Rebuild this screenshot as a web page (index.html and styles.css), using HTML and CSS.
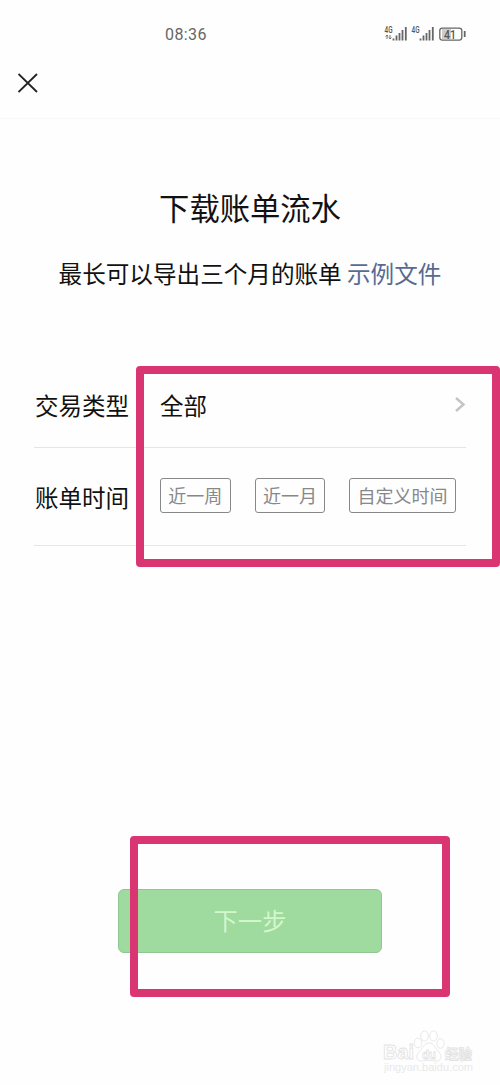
FILE: index.html
```html
<!DOCTYPE html>
<html lang="zh-CN">
<head>
    <meta charset="UTF-8">
    <meta name="viewport" content="width=device-width, initial-scale=1.0">
    <title>下载账单流水</title>
    <link rel="stylesheet" href="styles.css">
</head>
<body>
    <div class="status-bar">
        <span class="clock">08:36</span>
        <svg class="status-icons" width="86" height="20" viewBox="0 0 86 20">
            <g class="network">
                <text x="0.5" y="8.5" textLength="8" lengthAdjust="spacingAndGlyphs">4G</text>
                <text x="27.5" y="8.5" textLength="8" lengthAdjust="spacingAndGlyphs">4G</text>
            </g>
            <path class="arrows" d="M3 11v4M1.500 12.500L3 11l1 1.500M6 11v4M5 13.500L6 15l1.500-1.500"/>
            <path class="bars" d="M9.500 16.500v-2M12.500 16.500v-5M15.500 16.500V9M18.500 16.500V6M21.800 16.500V3"/>
            <path class="bars" d="M36.500 16.500v-2M39.500 16.500v-5M42.500 16.500V9M45.500 16.500V6M48.800 16.500V3"/>
            <rect class="level" x="58" y="5" width="9" height="10"/>
            <rect class="battery" x="55.800" y="4.100" width="22" height="12" rx="2.500"/>
            <text class="percent" x="60" y="14.500" textLength="12" lengthAdjust="spacingAndGlyphs">41</text>
            <path class="cap" d="M80.700 7v6"/>
        </svg>
    </div>
    <div class="nav-bar">
        <svg class="close" width="20" height="20" viewBox="0 0 20 20">
            <path d="M0.500 1l18.500 18M19 1L0.500 19"/>
        </svg>
    </div>

    <div class="header">
        <h1>下载账单流水</h1>
        <p>最长可以导出三个月的账单 <a>示例文件</a></p>
    </div>

    <div class="form">
        <div class="row row-type">
            <span class="label">交易类型</span>
            <span class="value">全部</span>
            <svg class="arrow" width="12" height="16" viewBox="0 0 12 16">
                <path d="M2 1l7.500 6.500L2 14"/>
            </svg>
        </div>
        <div class="row row-time">
            <span class="label">账单时间</span>
            <div class="options">
                <button>近一周</button>
                <button>近一月</button>
                <button>自定义时间</button>
            </div>
        </div>
    </div>

    <button class="next">下一步</button>

    <!-- highlight frames drawn over the page -->
    <div class="frame frame-form"></div>
    <div class="frame frame-next"></div>

    <svg class="watermark" width="110" height="50" viewBox="0 0 110 50">
        <g class="paw">
            <ellipse cx="38" cy="17" rx="3.800" ry="4.800"/>
            <ellipse cx="44.500" cy="10" rx="3.800" ry="5"/>
            <ellipse cx="53.500" cy="10" rx="3.800" ry="5"/>
            <ellipse cx="60.500" cy="17.500" rx="3.600" ry="4.800"/>
            <path d="M49 17c-5 0-6 5-9 8-6 5-3 11 3 10 4-1 8-1 12 0 6 1 8-5 3-10-3-3-4-8-9-8z"/>
        </g>
        <text class="brand" x="3" y="33" textLength="31" lengthAdjust="spacingAndGlyphs">Bai</text>
        <text class="du" x="42" y="32.500" textLength="14" lengthAdjust="spacingAndGlyphs">du</text>
        <text class="word" x="65" y="33" textLength="27" lengthAdjust="spacingAndGlyphs">经验</text>
        <text class="site" x="4" y="45" textLength="89" lengthAdjust="spacingAndGlyphs">jingyan.baidu.com</text>
    </svg>
</body>
</html>
```
FILE: styles.css
```css
* {
    box-sizing: border-box;
}

body {
    margin: 0;
    position: relative;
    height: 1085px;
    overflow: hidden;
    background: #fefefe;
    color: #111;
    font-family: "Noto Sans CJK SC", sans-serif;
}

.status-bar {
    display: flex;
    justify-content: space-between;
    height: 58px;
    padding: 24px 30px 0 165px;
}

.clock {
    font-family: Roboto, sans-serif;
    font-size: 16px;
    line-height: 21px;
    letter-spacing: 0.4px;
    color: #666;
}

.status-icons {
    fill: none;
    stroke: #666;
}

.status-icons text {
    fill: #555;
    stroke: none;
    font-family: Roboto, sans-serif;
    font-size: 9px;
    font-weight: 500;
}

.status-icons .percent {
    font-size: 13px;
}

.status-icons .arrows {
    stroke-width: 0.9;
}

.status-icons .bars {
    stroke-width: 1.8;
}

.status-icons .battery {
    stroke-width: 1.3;
}

.status-icons .level {
    fill: #ccc;
    stroke: none;
}

.status-icons .cap {
    stroke-width: 1.8;
}

.nav-bar {
    height: 61px;
    padding: 15px 18px;
    border-bottom: 1px solid #f8f8f8;
}

.close {
    display: block;
    fill: none;
    stroke: #222;
    stroke-width: 1.8;
}

.header {
    padding-top: 65px;
    text-align: center;
}

.header h1 {
    margin: 0;
    font-size: 30.3px;
    line-height: 46px;
    font-weight: 400;
}

.header p {
    margin: 23px 0 0;
    font-size: 23.6px;
    line-height: 40px;
    white-space: nowrap;
}

.header a {
    color: #576b95;
}

.form {
    margin: 69px 34px 0;
}

.row {
    display: flex;
    align-items: center;
    border-bottom: 1px solid #e5e5e5;
    font-size: 23.5px;
}

.row-type {
    height: 86px;
}

.row-time {
    height: 98px;
}

.label {
    width: 126px;
    padding-left: 1px;
}

.row-time .label {
    padding-top: 1px;
}

.arrow {
    margin-left: auto;
    fill: none;
    stroke: #c4c4c4;
    stroke-width: 2.4;
}

.options {
    display: flex;
    gap: 24px;
    margin-bottom: 3px;
}

.options button {
    height: 35px;
    padding: 0 7.3px 1px;
    border: 1px solid #888;
    border-radius: 3px;
    background: none;
    color: #888;
    font-family: inherit;
    font-size: 18px;
    line-height: 32px;
    white-space: nowrap;
}

.next {
    display: block;
    width: 264px;
    height: 64px;
    margin: 343px auto 0;
    padding: 0 0 3px;
    border: 1px solid #8fc793;
    border-radius: 6px;
    background: #9fda9f;
    color: #d2f7cd;
    font-family: inherit;
    font-size: 24.3px;
}

.frame {
    position: absolute;
    border: 8px solid #d93572;
    border-radius: 4px;
}

.frame-form {
    left: 136px;
    top: 366px;
    width: 364px;
    height: 201px;
}

.frame-next {
    left: 130px;
    top: 836px;
    width: 320px;
    height: 161px;
}

.watermark {
    position: absolute;
    left: 380px;
    top: 1026px;
    fill: #fff;
    stroke: #e2e2e2;
    stroke-width: 0.8;
    font-family: "Liberation Sans", "Noto Sans CJK SC", sans-serif;
    font-weight: bold;
}

.watermark .brand {
    font-size: 20px;
}

.watermark .du {
    font-size: 13px;
}

.watermark .word {
    font-size: 13.5px;
}

.watermark .site {
    font-size: 11px;
    font-weight: normal;
    fill: #e9e9e9;
    stroke: none;
}
```
